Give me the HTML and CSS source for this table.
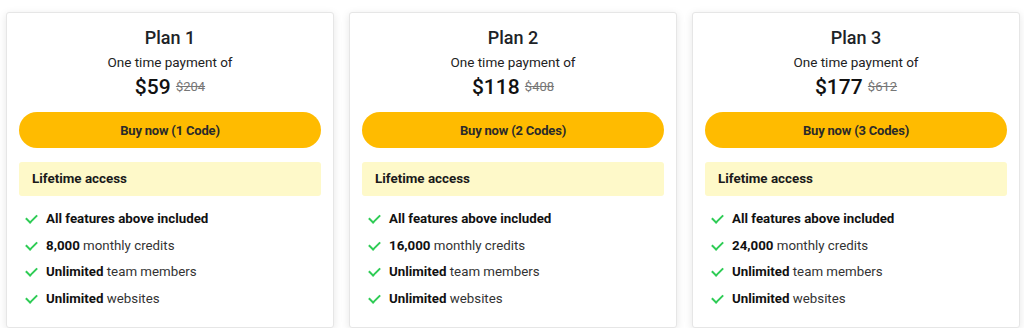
FILE: index.html
```html
<!DOCTYPE html>
<html lang="en">
	<head>
		<meta charset="UTF-8">
		<meta name="viewport" content="width=device-width, initial-scale=1.0">
		<title>Pricing</title>
		<link rel="stylesheet" href="styles.css">
	</head>
	<body>
		<div class="plans">
			<div class="plan">
				<h2>Plan 1</h2>
				<p class="note">One time payment of</p>
				<div class="price">$59 <s>$204</s></div>
				<button type="button">Buy now (1 Code)</button>
				<div class="access">Lifetime access</div>
				<ul class="features">
					<li><b>All features above included</b></li>
					<li><b>8,000</b> monthly credits</li>
					<li><b>Unlimited</b> team members</li>
					<li><b>Unlimited</b> websites</li>
				</ul>
			</div>

			<div class="plan">
				<h2>Plan 2</h2>
				<p class="note">One time payment of</p>
				<div class="price">$118 <s>$408</s></div>
				<button type="button">Buy now (2 Codes)</button>
				<div class="access">Lifetime access</div>
				<ul class="features">
					<li><b>All features above included</b></li>
					<li><b>16,000</b> monthly credits</li>
					<li><b>Unlimited</b> team members</li>
					<li><b>Unlimited</b> websites</li>
				</ul>
			</div>

			<div class="plan">
				<h2>Plan 3</h2>
				<p class="note">One time payment of</p>
				<div class="price">$177 <s>$612</s></div>
				<button type="button">Buy now (3 Codes)</button>
				<div class="access">Lifetime access</div>
				<ul class="features">
					<li><b>All features above included</b></li>
					<li><b>24,000</b> monthly credits</li>
					<li><b>Unlimited</b> team members</li>
					<li><b>Unlimited</b> websites</li>
				</ul>
			</div>
		</div>
	</body>
</html>
```

FILE: styles.css
```css
body {
    font-family: Roboto, "Liberation Sans", Arial, sans-serif;
    background-color: #ffffff;
    color: #1d2327;
    margin: 0;
    padding: 12px 4px 0 6px;
}

.plans {
    display: flex;
    gap: 15px;
}

.plan {
    width: 328px;
    height: 316px;
    box-sizing: border-box;
    background-color: #ffffff;
    border: 1px solid #e6e6e6;
    border-radius: 3px;
    box-shadow: 0 2px 8px rgba(0, 0, 0, 0.1);
    padding: 14px 12px 0 12px;
    text-align: center;
}

h2 {
    margin: 0;
    font-size: 18px;
    font-weight: 500;
    line-height: 22px;
    color: #1d2327;
}

.note {
    margin: 4px 0 0 0;
    font-size: 13.5px;
    line-height: 18px;
    color: #222222;
}

.price {
    margin-top: 2px;
    font-size: 21px;
    font-weight: 500;
    line-height: 28px;
    color: #111111;
}

.price s {
    font-size: 13px;
    font-weight: 400;
    color: #777777;
    vertical-align: 3px;
}

button {
    display: block;
    width: 100%;
    height: 36px;
    margin-top: 11px;
    background-color: #ffbb00;
    color: #2a2a2a;
    border: none;
    border-radius: 18px;
    font-family: inherit;
    font-size: 13px;
    font-weight: 700;
    letter-spacing: -0.2px;
    cursor: pointer;
}

.access {
    margin-top: 14px;
    height: 34px;
    line-height: 34px;
    padding: 0 13px;
    background-color: #fef9c9;
    border-radius: 3px;
    font-size: 13.4px;
    font-weight: 700;
    text-align: left;
    color: #1a1a1a;
}

.features {
    list-style: none;
    margin: 10px 0 0 0;
    padding: 0 0 0 7px;
    text-align: left;
}

.features li {
    position: relative;
    padding-left: 20px;
    font-size: 13.3px;
    line-height: 26.5px;
    color: #333333;
}

.features li b {
    color: #111111;
}

.features li::before {
    content: "";
    position: absolute;
    left: 0;
    top: 8px;
    width: 9px;
    height: 5px;
    border-left: 2px solid #2ecc55;
    border-bottom: 2px solid #2ecc55;
    transform: rotate(-45deg);
}
```
